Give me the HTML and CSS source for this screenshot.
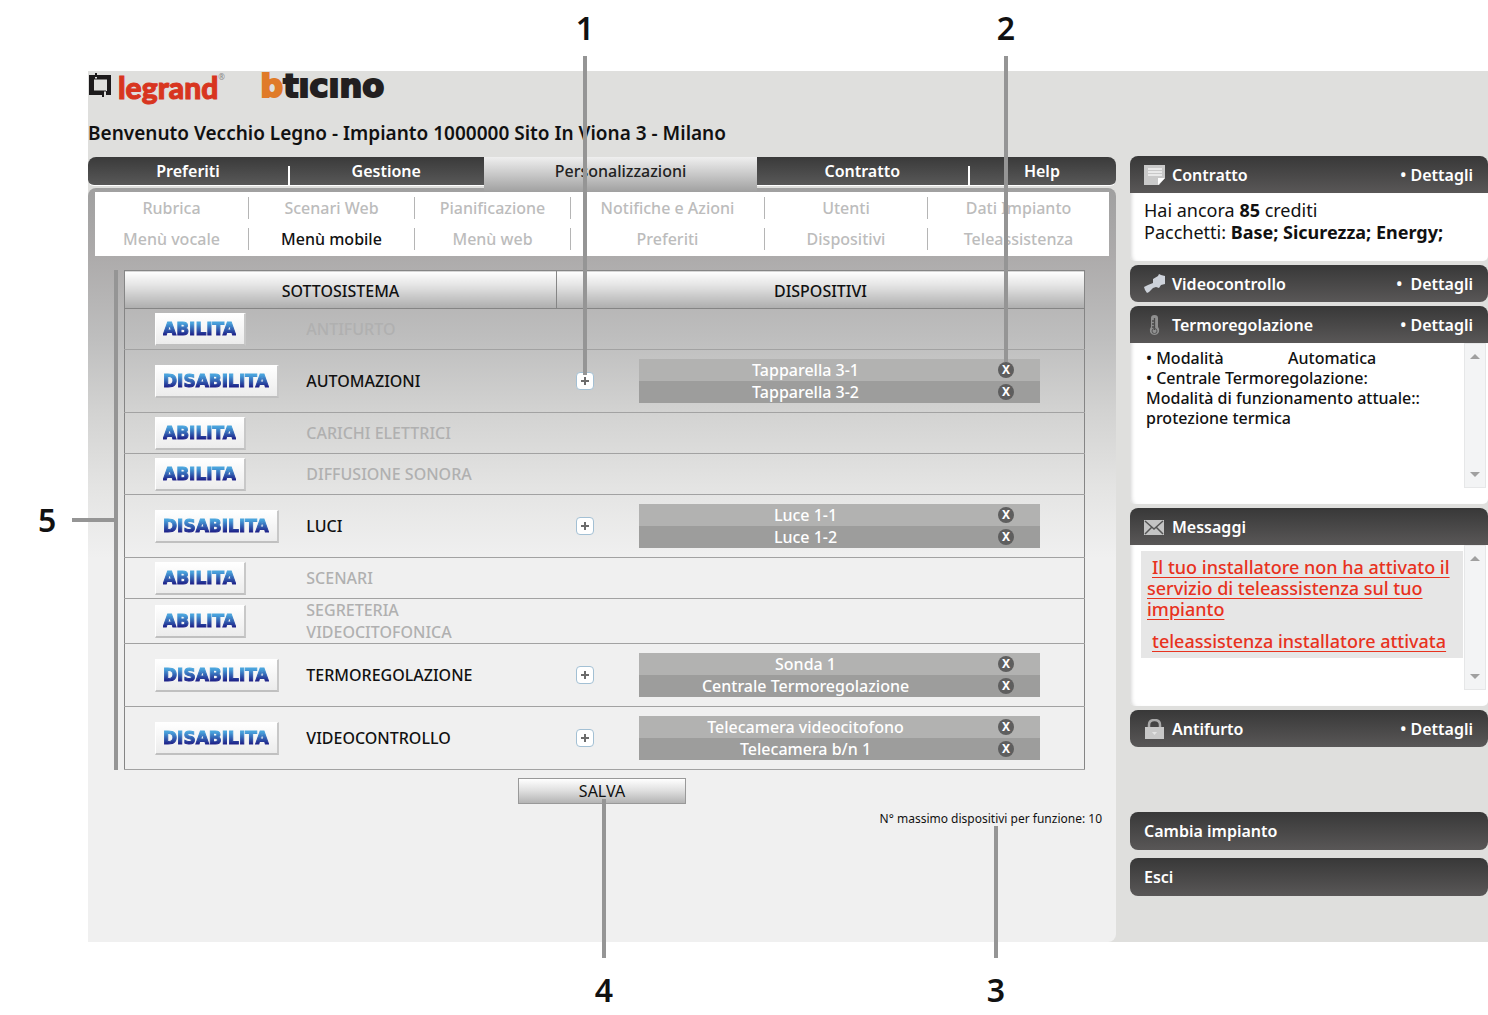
FILE: index.html
```html
<!DOCTYPE html>
<html lang="it">
<head>
    <meta charset="UTF-8">
    <meta name="viewport" content="width=device-width, initial-scale=1.0">
    <title>Menù mobile</title>
    <link rel="stylesheet" href="styles.css">
</head>
<body>
    <div class="app">
        <div class="main">
            <header class="header">
                <div class="logos">
                    <svg class="legrand-mark" width="22" height="26" viewBox="0 0 22 26">
                        <path d="M7 1v4M14 20v5" stroke="#1c1a1b" stroke-width="2"/>
                        <path d="M0 3h6v4H5v12h10v4H0z" fill="#1c1a1b"/>
                        <path d="M8 3h14v20h-5v-4h1V7H8z" fill="#1c1a1b"/>
                        <path d="M5 7h13M5 19h12" stroke="#1c1a1b" stroke-width="1"/>
                    </svg>
                    <span class="legrand">legrand</span><span class="reg">®</span>
                    <span class="bticino"><b>b</b>tıcıno</span>
                </div>
                <h1>Benvenuto Vecchio Legno - Impianto 1000000 Sito In Viona 3 - Milano</h1>
            </header>

            <nav class="tabs">
                <a href="#" class="tab tab-preferiti">Preferiti</a>
                <a href="#" class="tab tab-gestione sep">Gestione</a>
                <a href="#" class="tab tab-personal active">Personalizzazioni</a>
                <a href="#" class="tab tab-contratto">Contratto</a>
                <a href="#" class="tab tab-help sep">Help</a>
            </nav>

            <div class="panel">
                <nav class="submenu">
                    <a href="#">Rubrica</a>
                    <a href="#">Scenari Web</a>
                    <a href="#">Pianificazione</a>
                    <a href="#">Notifiche e Azioni</a>
                    <a href="#">Utenti</a>
                    <a href="#">Dati Impianto</a>
                    <a href="#">Menù vocale</a>
                    <a href="#" class="current">Menù mobile</a>
                    <a href="#">Menù web</a>
                    <a href="#">Preferiti</a>
                    <a href="#">Dispositivi</a>
                    <a href="#">Teleassistenza</a>
                </nav>

                <table class="systems">
                    <colgroup>
                        <col class="col-action">
                        <col class="col-name">
                        <col class="col-add">
                        <col class="col-devices">
                    </colgroup>
                    <thead>
                        <tr>
                            <th colspan="2">SOTTOSISTEMA</th>
                            <th colspan="2">DISPOSITIVI</th>
                        </tr>
                    </thead>
                    <tbody>
                        <tr class="off">
                            <td><button class="toggle"><span>ABILITA</span></button></td>
                            <td class="name">ANTIFURTO</td>
                            <td></td>
                            <td></td>
                        </tr>
                        <tr class="on">
                            <td><button class="toggle"><span>DISABILITA</span></button></td>
                            <td class="name">AUTOMAZIONI</td>
                            <td class="add-cell"><button class="add" aria-label="Aggiungi"></button></td>
                            <td class="devices">
                                <ul>
                                    <li><span>Tapparella 3-1</span><button class="remove" aria-label="Rimuovi"></button></li>
                                    <li><span>Tapparella 3-2</span><button class="remove" aria-label="Rimuovi"></button></li>
                                </ul>
                            </td>
                        </tr>
                        <tr class="off">
                            <td><button class="toggle"><span>ABILITA</span></button></td>
                            <td class="name">CARICHI ELETTRICI</td>
                            <td></td>
                            <td></td>
                        </tr>
                        <tr class="off">
                            <td><button class="toggle"><span>ABILITA</span></button></td>
                            <td class="name">DIFFUSIONE SONORA</td>
                            <td></td>
                            <td></td>
                        </tr>
                        <tr class="on">
                            <td><button class="toggle"><span>DISABILITA</span></button></td>
                            <td class="name">LUCI</td>
                            <td class="add-cell"><button class="add" aria-label="Aggiungi"></button></td>
                            <td class="devices">
                                <ul>
                                    <li><span>Luce 1-1</span><button class="remove" aria-label="Rimuovi"></button></li>
                                    <li><span>Luce 1-2</span><button class="remove" aria-label="Rimuovi"></button></li>
                                </ul>
                            </td>
                        </tr>
                        <tr class="off">
                            <td><button class="toggle"><span>ABILITA</span></button></td>
                            <td class="name">SCENARI</td>
                            <td></td>
                            <td></td>
                        </tr>
                        <tr class="off">
                            <td><button class="toggle"><span>ABILITA</span></button></td>
                            <td class="name">SEGRETERIA<br>VIDEOCITOFONICA</td>
                            <td></td>
                            <td></td>
                        </tr>
                        <tr class="on">
                            <td><button class="toggle"><span>DISABILITA</span></button></td>
                            <td class="name">TERMOREGOLAZIONE</td>
                            <td class="add-cell"><button class="add" aria-label="Aggiungi"></button></td>
                            <td class="devices">
                                <ul>
                                    <li><span>Sonda 1</span><button class="remove" aria-label="Rimuovi"></button></li>
                                    <li><span>Centrale Termoregolazione</span><button class="remove" aria-label="Rimuovi"></button></li>
                                </ul>
                            </td>
                        </tr>
                        <tr class="on">
                            <td><button class="toggle"><span>DISABILITA</span></button></td>
                            <td class="name">VIDEOCONTROLLO</td>
                            <td class="add-cell"><button class="add" aria-label="Aggiungi"></button></td>
                            <td class="devices">
                                <ul>
                                    <li><span>Telecamera videocitofono</span><button class="remove" aria-label="Rimuovi"></button></li>
                                    <li><span>Telecamera b/n 1</span><button class="remove" aria-label="Rimuovi"></button></li>
                                </ul>
                            </td>
                        </tr>
                    </tbody>
                </table>

                <button class="save">SALVA</button>
                <p class="note">N° massimo dispositivi per funzione: 10</p>
            </div>
        </div>

        <aside class="sidebar">
            <section class="box">
                <h2 class="bar open">
                    <svg width="22" height="20" viewBox="0 0 22 20">
                        <path d="M0 0h21v13l-6 7H0z" fill="#c9c9c9"/>
                        <path d="M4 4h14M4 7h14M4 10h14" stroke="#f4f4f4" stroke-width="1.4"/>
                        <path d="M14 20v-7h7z" fill="#fff"/>
                    </svg>
                    <span class="title">Contratto</span>
                    <a href="#">• Dettagli</a>
                </h2>
                <div class="body credits">
                    <p>Hai ancora <b>85</b> crediti</p>
                    <p>Pacchetti: <b>Base; Sicurezza; Energy;</b></p>
                </div>
            </section>

            <section class="box">
                <h2 class="bar">
                    <svg width="22" height="20" viewBox="0 0 22 20">
                        <path d="M9 5l5-3 1-2 2 1 4 1v8l-4 1-2 3-3-1-3 1-4 4-2 1-2-3-1-3 4-2 5-2z" fill="#cdd2da"/>
                    </svg>
                    <span class="title">Videocontrollo</span>
                    <a href="#">•&nbsp; Dettagli</a>
                </h2>
            </section>

            <section class="box">
                <h2 class="bar open">
                    <svg width="22" height="20" viewBox="0 0 22 20">
                        <path d="M7 3q0-3 3.500-3t3.500 3v9q2 2 1 5-1.500 3-4.500 3t-4.500-3q-1-3 1-5z" fill="#8f8f8f"/>
                        <path d="M10.500 3v12M8 6h2M8 9h2M8 12h2" stroke="#4a4a4a" stroke-width="1.300"/>
                        <circle cx="10.500" cy="16" r="2.500" fill="none" stroke="#555"/>
                    </svg>
                    <span class="title">Termoregolazione</span>
                    <a href="#">• Dettagli</a>
                </h2>
                <div class="body tall">
                    <div class="thermo">
                        <p class="mode"><span>• Modalità</span><span>Automatica</span></p>
                        <p>• Centrale Termoregolazione:</p>
                        <p>Modalità di funzionamento attuale:: protezione termica</p>
                    </div>
                    <div class="scroll"></div>
                </div>
            </section>

            <section class="box">
                <h2 class="bar open">
                    <svg width="22" height="20" viewBox="0 0 22 20">
                        <rect x="0" y="3" width="20" height="15" fill="#c4c4c4"/>
                        <path d="M1 4l9 8 9-8M1 17l7-7M19 17l-7-7" fill="none" stroke="#555" stroke-width="1.500"/>
                    </svg>
                    <span class="title">Messaggi</span>
                </h2>
                <div class="body tall">
                    <div class="messages">
                        <p><a href="#">Il tuo installatore non ha attivato il servizio di teleassistenza sul tuo impianto</a></p>
                        <p><a href="#">teleassistenza installatore attivata</a></p>
                    </div>
                    <div class="scroll"></div>
                </div>
            </section>

            <section class="box">
                <h2 class="bar">
                    <svg width="22" height="20" viewBox="0 0 22 20">
                        <path d="M5 10V6q0-5 5.500-5T16 6v4" fill="none" stroke="#aaa" stroke-width="2.500"/>
                        <rect x="1" y="8" width="19" height="12" fill="#c8c8c8"/>
                        <path d="M8 13h5l-2.500 3z" fill="#e4e4e4"/>
                    </svg>
                    <span class="title">Antifurto</span>
                    <a href="#">• Dettagli</a>
                </h2>
            </section>

            <div class="actions">
                <button class="bar">Cambia impianto</button>
                <button class="bar">Esci</button>
            </div>
        </aside>
    </div>

    <!-- numbered callouts drawn over the page -->
    <div class="callout c1"><span>1</span><i></i></div>
    <div class="callout c2"><span>2</span><i></i></div>
    <div class="callout c3"><i></i><span>3</span></div>
    <div class="callout c4"><i></i><span>4</span></div>
    <div class="callout c5"><span>5</span><i></i><b></b></div>
</body>
</html>
```

FILE: styles.css
```css
* {
    box-sizing: border-box;
}
body {
    margin: 0;
    padding: 71px 0 72px 88px;
    background-color: #fff;
    color: #111;
    font-family: "Noto Sans", "Open Sans", sans-serif;
    font-size: 16px;
    line-height: 22px;
    position: relative;
}
h1, h2, p, ul {
    margin: 0;
    padding: 0;
}
a {
    color: inherit;
    text-decoration: none;
}
button {
    font-family: inherit;
    cursor: pointer;
}
.app {
    display: flex;
    gap: 14px;
    background-color: #dfdfdd;
}
.main {
    flex: 1;
    min-width: 0;
    display: flex;
    flex-direction: column;
}

/* header */
.header {
    height: 86px;
}
.logos {
    display: flex;
    align-items: flex-start;
    height: 50px;
}
.legrand-mark {
    margin: 1px 7px 0 1px;
}
.legrand {
    color: #d8351f;
    font-family: Lato, sans-serif;
    font-size: 30px;
    font-weight: 900;
    line-height: 32px;
    -webkit-text-stroke: 1px #d8351f;
}
.reg {
    width: 42px;
    color: #888;
    font-size: 8px;
    line-height: 12px;
}
.bticino {
    color: #231f20;
    font-family: "DejaVu Sans", sans-serif;
    font-size: 32px;
    font-weight: bold;
    line-height: 30px;
    -webkit-text-stroke: 2px;
}
.bticino b {
    color: #e07b28;
}
h1 {
    font-size: 19px;
    font-weight: 600;
    line-height: 24px;
}

/* main tabs */
.tabs {
    display: flex;
    align-items: flex-start;
    height: 31px;
}
.tab {
    height: 29px;
    border-bottom: 1px solid #fff;
    background: linear-gradient(#3a3a3a, #585858);
    color: #fff;
    font-weight: 600;
    line-height: 29px;
    text-align: center;
    position: relative;
}
.tab-preferiti {
    flex: 200;
    border-radius: 8px 0 0 6px;
}
.tab-gestione {
    flex: 196;
}
.tab-personal {
    flex: 272;
}
.tab-contratto {
    flex: 211;
}
.tab-help {
    flex: 148;
    border-radius: 0 8px 6px 0;
}
.tab.sep::before {
    content: "";
    position: absolute;
    left: 0;
    top: 9px;
    bottom: 0;
    width: 2px;
    background-color: #fff;
}
.tab.active {
    height: 35px;
    border: 0;
    background: linear-gradient(#efefef, #c8c8c8 50%, #a0a0a0);
    color: #222;
    font-weight: 500;
    z-index: 1;
}

.panel {
    flex: 1;
    padding: 4px 7px 0;
    border-radius: 8px 8px 8px 0;
    background: linear-gradient(#a0a0a0, #adabab 69px, #bebebe 150px, #d2d2d1 222px, #e4e4e3 300px, #f0f0f0 370px);
}
.submenu {
    display: grid;
    grid-template-columns: 154fr 166fr 156fr 194fr 163fr 181fr;
    background-color: #fff;
    padding-bottom: 2px;
    position: relative;
    z-index: 2;
}
.submenu a {
    margin: 5px 0 4px;
    border-right: 1px solid #b5b5b5;
    color: #bcbcbc;
    font-weight: 500;
    text-align: center;
    line-height: 22px;
}
.submenu a:nth-child(6n) {
    border-right: 0;
}
.submenu .current {
    color: #111;
}

/* subsystem table */
.systems {
    width: calc(100% - 53px);
    margin: 14px 24px 0 29px;
    border: 1px solid #858585;
    border-collapse: collapse;
    table-layout: fixed;
}
.col-action {
    width: 18%;
}
.col-name {
    width: 27%;
}
.col-add {
    width: 6%;
}
.col-devices {
    width: 49%;
}
.systems th {
    height: 38px;
    padding: 2px 0 0;
    border: 1px solid #858585;
    background: linear-gradient(#fff, #e2e2e2 40%, #adadad);
    font-weight: 500;
}
.systems td {
    padding: 0;
    border-bottom: 1px solid #a2a2a2;
}
.systems td:first-child {
    padding-left: 30px;
}
.systems .off {
    height: 41px;
}
.systems .on {
    height: 63px;
}
.systems .name {
    padding-left: 9px;
    font-weight: 500;
}
.off .name {
    color: #b0b0b0;
}
.toggle {
    display: block;
    height: 33px;
    padding: 0 8px 0 7px;
    border: 1px solid #fff;
    border-right: 2px solid #c8c8c8;
    border-bottom: 2px solid #c0c0c0;
    background: linear-gradient(#fff, #ececec);
}
.toggle span {
    display: block;
    background: linear-gradient(#49a4dd 25%, #1d2088 75%);
    -webkit-background-clip: text;
    background-clip: text;
    color: transparent;
    font-family: "DejaVu Sans", sans-serif;
    font-size: 17px;
    font-weight: bold;
    line-height: 24px;
    -webkit-text-stroke: 1px transparent;
}
.add-cell {
    text-align: center;
}
.add {
    display: block;
    width: 18px;
    height: 18px;
    margin: 0 auto;
    padding: 0;
    border: 1px solid #a3c0d4;
    border-radius: 4px;
    background: linear-gradient(#6c6c6c, #6c6c6c) center / 8px 2px no-repeat,
                linear-gradient(#6c6c6c, #6c6c6c) center / 2px 8px no-repeat, #fff;
}
.systems .devices {
    padding: 0 44px 0 25px;
}
.devices li {
    display: flex;
    align-items: center;
    height: 22px;
    background-color: #b2b2b1;
    color: #fff;
    font-weight: 500;
}
.devices li:nth-child(even) {
    background-color: #9d9d9c;
}
.devices li span {
    flex: 1;
    text-align: center;
}
.remove {
    width: 16px;
    height: 16px;
    margin: 0 26px;
    padding: 0;
    border: 0;
    border-radius: 50%;
    background-color: #5e5e5e;
    color: #fff;
    font-size: 12px;
    font-weight: bold;
    line-height: 16px;
}
.remove::before {
    content: "X";
}
.save {
    display: block;
    width: 168px;
    height: 26px;
    margin: 8px auto 0;
    border: 1px solid #999;
    background: linear-gradient(#fff, #dedede 50%, #b4b4b4);
    color: #111;
    font-size: 16px;
    line-height: 22px;
}
.note {
    padding: 4px 7px 0 0;
    font-size: 12px;
    text-align: right;
}

/* sidebar */
.sidebar {
    width: 358px;
    padding-top: 85px;
    padding-bottom: 46px;
}
.box {
    margin-bottom: 4px;
}
.bar {
    display: flex;
    align-items: center;
    width: 100%;
    height: 37px;
    padding: 0 15px 0 14px;
    border: 0;
    border-radius: 8px;
    background: linear-gradient(#383838, #595757);
    color: #fff;
    font-size: 16px;
    font-weight: 600;
}
.bar.open {
    border-radius: 8px 8px 0 0;
}
.bar svg {
    margin-right: 6px;
}
.bar .title {
    flex: 1;
}
.body {
    background-color: #fff;
    border-radius: 0 0 5px 5px;
    box-shadow: inset 4px 0 4px -3px #ccc;
}
.credits {
    height: 68px;
    padding: 6px 14px;
    font-size: 18px;
}
.tall {
    display: flex;
    height: 161px;
}
.thermo {
    flex: 1;
    padding: 5px 16px;
    font-size: 16px;
    font-weight: 500;
    line-height: 20px;
}
.mode {
    display: flex;
}
.mode span:first-child {
    width: 142px;
}
.messages {
    flex: 1;
    align-self: flex-start;
    margin: 6px 1px 0 11px;
    padding: 6px 0 6px 6px;
    background-color: #e6e6e6;
    color: #e8321e;
    font-size: 18px;
    font-weight: 500;
    line-height: 21px;
    text-indent: 5px;
}
.messages p + p {
    margin-top: 11px;
}
.messages a {
    text-decoration: underline;
    text-underline-offset: 3px;
}
.scroll {
    display: flex;
    flex-direction: column;
    justify-content: space-between;
    align-items: center;
    width: 22px;
    height: 145px;
    margin-right: 2px;
    padding: 10px 0;
    border: 1px solid #e6e7e8;
    background-color: #f3f4f5;
}
.scroll::before, .scroll::after {
    content: "";
    border: 5px solid transparent;
}
.scroll::before {
    border-top: 0;
    border-bottom-color: #a0a0a0;
}
.scroll::after {
    border-bottom: 0;
    border-top-color: #a0a0a0;
}
.actions {
    display: flex;
    flex-direction: column;
    gap: 8px;
    margin-top: 65px;
}
.actions .bar {
    height: 38px;
}

/* callouts */
.callout {
    position: absolute;
    z-index: 5;
    display: flex;
    flex-direction: column;
    align-items: center;
    width: 20px;
    font-size: 32px;
    font-weight: 600;
    line-height: 32px;
}
.callout i {
    width: 4px;
    background-color: #959595;
}
.c1, .c2 {
    top: 12px;
    gap: 12px;
}
.c1 {
    left: 575px;
}
.c2 {
    left: 996px;
}
.c1 i {
    height: 319px;
}
.c2 i {
    height: 306px;
}
.c3, .c4 {
    gap: 16px;
}
.c3 {
    left: 986px;
    top: 826px;
}
.c3 i {
    height: 132px;
}
.c4 {
    left: 594px;
    top: 799px;
}
.c4 i {
    height: 159px;
}
.c5 {
    left: 38px;
    top: 270px;
    flex-direction: row;
    gap: 16px;
    width: auto;
}
.c5 span, .c5 i {
    align-self: center;
}
.c5 i {
    width: 42px;
    height: 4px;
    margin-right: -16px;
}
.c5 b {
    width: 4px;
    height: 500px;
    background-color: #959595;
}
```
